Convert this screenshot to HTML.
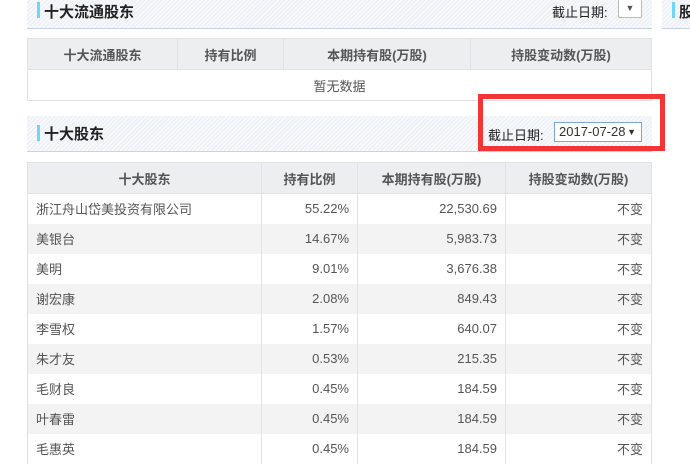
<!DOCTYPE html>
<html><head><meta charset="utf-8"><style>
*{margin:0;padding:0;box-sizing:border-box}
body{width:690px;height:461px;overflow:hidden;background:#fff;font-family:"Liberation Sans","Noto Sans CJK SC",sans-serif;color:#333;position:relative}
.hd{position:absolute;background-color:#eef2f7;background-image:repeating-linear-gradient(135deg,rgba(255,255,255,.7) 0 1px,transparent 1px 3px);border-bottom:1px solid #c4d4e6}
.bar{position:absolute;width:3px;background:#6fd6f7}
.tt{position:absolute;font-size:15px;font-weight:bold;color:#222;white-space:nowrap}
.lb{position:absolute;font-size:13px;color:#222;white-space:nowrap}
table{position:absolute;border-collapse:collapse;font-size:13px}
td,th{border:1px solid #dfe2e6;height:30px;color:#555}
th{background:#eceef0;font-weight:bold;color:#555;height:31px}
td{border-top:none;border-bottom:none;padding:0 8px;height:30px}
tr.g td{background:#f3f3f3}
.r{text-align:right}
</style></head><body>
<div class="hd" style="left:27px;top:-8px;width:625px;height:37px"></div>
<div class="bar" style="left:37px;top:2px;height:16px"></div>
<div class="tt" style="left:44px;top:1px">十大流通股东</div>
<div class="lb" style="left:552px;top:2px">截止日期:</div>
<div style="position:absolute;left:618px;top:-2px;width:24px;height:20px;background:#fff;border:1px solid #bbb;border-radius:2px;font-size:9px;color:#555;text-align:center;line-height:18px">▼</div>
<div class="hd" style="left:662px;top:-8px;width:40px;height:37px"></div>
<div class="bar" style="left:672px;top:2px;height:16px"></div>
<div class="tt" style="left:679px;top:1px">股</div>

<table style="left:27px;top:38px;width:625px">
<tr><th style="width:150px">十大流通股东</th><th style="width:106px">持有比例</th><th style="width:187px">本期持有股(万股)</th><th>持股变动数(万股)</th></tr>
<tr><td colspan="4" style="text-align:center;border-bottom:1px solid #dfe2e6;height:31px">暂无数据</td></tr>
</table>

<div class="hd" style="left:27px;top:116px;width:625px;height:36px"></div>
<div class="bar" style="left:37px;top:125px;height:16px"></div>
<div class="tt" style="left:44px;top:123px">十大股东</div>
<div class="lb" style="left:488px;top:125px">截止日期:</div>
<div style="position:absolute;left:554px;top:122px;width:88px;height:20px;background:#fff;border:1px solid #7fa6d8;font-size:13px;color:#333;line-height:18px;padding-left:4px">2017-07-28 <span style="font-size:9px;position:absolute;right:5px">▼</span></div>
<div style="position:absolute;left:478px;top:94px;width:187px;height:57px;border:5px solid #f33535"></div>

<table style="left:27px;top:162px;width:625px">
<tr><th style="width:234px">十大股东</th><th style="width:96px">持有比例</th><th style="width:148px">本期持有股(万股)</th><th>持股变动数(万股)</th></tr>
<tr><td>浙江舟山岱美投资有限公司</td><td class="r">55.22%</td><td class="r">22,530.69</td><td class="r">不变</td></tr>
<tr class="g"><td>美银台</td><td class="r">14.67%</td><td class="r">5,983.73</td><td class="r">不变</td></tr>
<tr><td>美明</td><td class="r">9.01%</td><td class="r">3,676.38</td><td class="r">不变</td></tr>
<tr class="g"><td>谢宏康</td><td class="r">2.08%</td><td class="r">849.43</td><td class="r">不变</td></tr>
<tr><td>李雪权</td><td class="r">1.57%</td><td class="r">640.07</td><td class="r">不变</td></tr>
<tr class="g"><td>朱才友</td><td class="r">0.53%</td><td class="r">215.35</td><td class="r">不变</td></tr>
<tr><td>毛财良</td><td class="r">0.45%</td><td class="r">184.59</td><td class="r">不变</td></tr>
<tr class="g"><td>叶春雷</td><td class="r">0.45%</td><td class="r">184.59</td><td class="r">不变</td></tr>
<tr><td>毛惠英</td><td class="r">0.45%</td><td class="r">184.59</td><td class="r">不变</td></tr>
</table>
</body></html>
